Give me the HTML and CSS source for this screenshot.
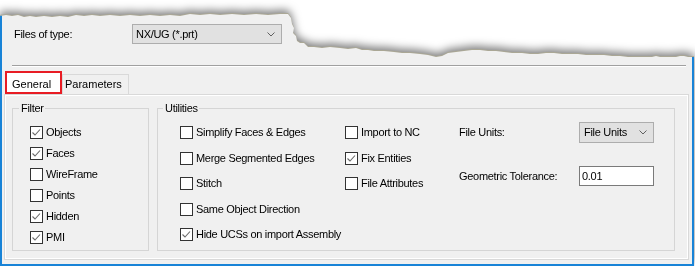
FILE: index.html
```html
<!DOCTYPE html>
<html>
<head>
<title>Import options</title>
<link rel="stylesheet" href="styles.css">
</head>
<body>

<div class="screen">
  <div class="dialog">

    <div class="type-row">
      <span class="type-label">Files of type:</span>
      <div class="combo combo-type">
        <span>NX/UG (*.prt)</span>
        <svg class="chev" width="8" height="5" viewBox="0 0 8 5"><polyline points="0.5,0.5 4,4 7.5,0.5"/></svg>
      </div>
    </div>

    <div class="sep"></div>

    <div class="tabs">
      <div class="tab tab-active">General</div>
      <div class="tab">Parameters</div>
    </div>

    <div class="panel">
      <div class="group group-filter">
        <div class="group-title">Filter</div>
        <div class="group-body">
          <div class="checks checks-filter">
            <div class="check"><span class="box on"><svg width="11" height="11" viewBox="0 0 11 11"><polyline points="1.5,5.5 4,8 9,2.5"/></svg></span>Objects</div>
            <div class="check"><span class="box on"><svg width="11" height="11" viewBox="0 0 11 11"><polyline points="1.5,5.5 4,8 9,2.5"/></svg></span>Faces</div>
            <div class="check"><span class="box"></span>WireFrame</div>
            <div class="check"><span class="box"></span>Points</div>
            <div class="check"><span class="box on"><svg width="11" height="11" viewBox="0 0 11 11"><polyline points="1.5,5.5 4,8 9,2.5"/></svg></span>Hidden</div>
            <div class="check"><span class="box on"><svg width="11" height="11" viewBox="0 0 11 11"><polyline points="1.5,5.5 4,8 9,2.5"/></svg></span>PMI</div>
          </div>
        </div>
      </div>

      <div class="group group-util">
        <div class="group-title">Utilities</div>
        <div class="group-body util-body">
          <div class="checks checks-util col-a">
            <div class="check"><span class="box"></span>Simplify Faces &amp; Edges</div>
            <div class="check"><span class="box"></span>Merge Segmented Edges</div>
            <div class="check"><span class="box"></span>Stitch</div>
            <div class="check"><span class="box"></span>Same Object Direction</div>
            <div class="check"><span class="box on"><svg width="11" height="11" viewBox="0 0 11 11"><polyline points="1.5,5.5 4,8 9,2.5"/></svg></span>Hide UCSs on import Assembly</div>
          </div>
          <div class="checks checks-util col-b">
            <div class="check"><span class="box"></span>Import to NC</div>
            <div class="check"><span class="box on"><svg width="11" height="11" viewBox="0 0 11 11"><polyline points="1.5,5.5 4,8 9,2.5"/></svg></span>Fix Entities</div>
            <div class="check"><span class="box"></span>File Attributes</div>
          </div>
          <div class="fields">
            <div class="field field-units">
              <span class="field-label">File Units:</span>
              <div class="combo combo-units">
                <span>File Units</span>
                <svg class="chev" width="8" height="5" viewBox="0 0 8 5"><polyline points="0.5,0.5 4,4 7.5,0.5"/></svg>
              </div>
            </div>
            <div class="field field-tol">
              <span class="field-label">Geometric Tolerance:</span>
              <div class="input">0.01</div>
            </div>
          </div>
        </div>
      </div>
    </div>

  </div>
</div>

</body>
</html>
```

FILE: styles.css
```css
body {
  margin: 0;
  background-color: #ffffff;
  font-family: "Liberation Sans", Arial, sans-serif;
  font-size: 11px;
  line-height: 13px;
  color: #000000;
  letter-spacing: -0.3px;
}

/* torn top edge + its shadow */
.screen {
  width: 694px;
  filter: drop-shadow(0 -1px 0 #aaa795) drop-shadow(0 -3px 4px rgba(0, 0, 0, 0.5));
}

.dialog {
  box-sizing: border-box;
  width: 694px;
  height: 266px;
  border: 2px solid #1883d7;
  background-color: #f0f0f0;
  clip-path: polygon(
    0 16px, 6px 15px, 12px 16px, 18px 15px, 24px 17px, 30px 16px, 36px 17px, 44px 16px,
    52px 17px, 60px 16px, 68px 17px, 76px 15px, 84px 16px, 92px 15px, 100px 16px,
    110px 15px, 120px 16px, 130px 15px, 140px 16px, 150px 15px, 160px 16px, 170px 15px,
    180px 16px, 190px 14px, 200px 15px, 210px 14px, 220px 15px, 232px 14px, 244px 15px,
    256px 14px, 268px 15px, 280px 14px, 288px 14px, 291px 18px, 292px 24px, 294px 28px,
    293px 33px, 296px 36px, 297px 41px, 300px 43px, 304px 43px, 308px 47px, 314px 47px,
    322px 48px, 330px 47px, 340px 48px, 348px 49px, 356px 48px, 362px 50px, 368px 50px,
    374px 51px, 384px 51px, 394px 52px, 402px 53px, 410px 53px, 420px 54px, 428px 55px,
    436px 57px, 442px 56px, 448px 53px, 456px 52px, 464px 51px, 472px 50px, 480px 50px,
    488px 51px, 496px 51px, 504px 52px, 512px 53px, 522px 53px, 530px 54px, 538px 54px,
    546px 53px, 554px 53px, 562px 54px, 570px 54px, 578px 54px, 586px 55px, 596px 55px,
    604px 55px, 612px 56px, 620px 56px, 628px 57px, 636px 57px, 644px 57px, 652px 57px,
    656px 56px, 660px 57px, 668px 57px, 676px 57px, 680px 56px, 684px 56px, 688px 57px,
    694px 57px, 694px 266px, 0 266px
  );
}

.type-row {
  display: flex;
  align-items: center;
  height: 20px;
  margin: 22px 0 0 12px;
}

.type-label {
  width: 118px;
}

.combo {
  box-sizing: border-box;
  display: flex;
  align-items: center;
  justify-content: space-between;
  border: 1px solid #adadad;
  background-color: #e1e1e1;
  padding: 0 6px 0 3px;
}

.combo-type {
  width: 150px;
  height: 20px;
}

.chev polyline {
  fill: none;
  stroke: #606060;
  stroke-width: 1;
}

.sep {
  margin: 21px 6px 0 10px;
  border-top: 1px solid #a0a0a0;
  border-bottom: 1px solid #ffffff;
}

.tabs {
  display: flex;
  align-items: flex-end;
  height: 23px;
  margin: 4px 0 0 3px;
  letter-spacing: 0;
}

.tab {
  box-sizing: border-box;
  width: 67px;
  height: 20px;
  padding: 3px 0 0 2px;
  border: 1px solid #d9d9d9;
  border-bottom: none;
  background-color: #f0f0f0;
}

.tab-active {
  width: 57px;
  height: 23px;
  padding: 5px 0 0 5px;
  border: 2px solid #e81c24;
  background-color: #ffffff;
}

.panel {
  box-sizing: border-box;
  display: flex;
  gap: 8px;
  height: 166px;
  margin: 0 3px 0 2px;
  padding: 13px 0 0 7px;
  border: 1px solid #d9d9d9;
  box-shadow: inset 0 0 0 1px #ffffff;
}

.group {
  box-sizing: border-box;
  height: 143px;
  border: 1px solid #d5d5d5;
}

.group-filter {
  width: 137px;
}

.group-util {
  width: 518px;
}

.group-title {
  width: fit-content;
  margin: -7px 0 0 6px;
  padding: 0 1px 0 2px;
  background-color: #f0f0f0;
}

.group-util .group-title {
  margin-left: 5px;
}

.group-body {
  margin-top: 7px;
}

.util-body {
  display: flex;
  align-items: flex-start;
}

.checks {
  padding-top: 4px;
}

.checks-filter {
  padding-left: 17px;
}

.checks-filter .check {
  height: 21px;
}

.check {
  display: flex;
  align-items: flex-start;
  gap: 3px;
  white-space: nowrap;
}

.checks-util .check {
  height: 25px;
}

.checks-util .check:nth-child(odd) {
  height: 26px;
}

.col-a {
  width: 165px;
  padding-left: 22px;
}

.col-b {
  width: 114px;
}

.box {
  box-sizing: border-box;
  display: flex;
  align-items: center;
  justify-content: center;
  flex: none;
  width: 13px;
  height: 13px;
  border: 1px solid #333333;
  background-color: #ffffff;
}

.box polyline {
  fill: none;
  stroke: #6a6a6a;
  stroke-width: 1.1;
}

.field {
  display: flex;
  align-items: center;
}

.field-label {
  width: 120px;
}

.field-units {
  height: 21px;
}

.field-tol {
  height: 20px;
  margin-top: 23px;
}

.combo-units {
  width: 75px;
  height: 21px;
  padding-left: 4px;
}

.input {
  box-sizing: border-box;
  width: 75px;
  height: 20px;
  padding: 3px 0 0 2px;
  border: 1px solid #7a7a7a;
  background-color: #ffffff;
}
```
